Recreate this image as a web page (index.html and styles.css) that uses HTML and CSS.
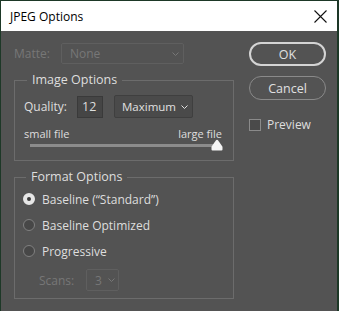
FILE: index.html
```html
<!DOCTYPE html>
<html lang="en">
<head>
  <meta charset="UTF-8">
  <title>JPEG Options</title>
  <link rel="stylesheet" href="styles.css">
</head>
<body>
  <div class="window">
    <div class="titlebar">
      <span class="title">JPEG Options</span>
      <svg class="close" width="13" height="13" viewBox="0 0 13 13">
        <path d="M0.5 0.5 L12.5 12.5 M12.5 0.5 L0.5 12.5" stroke="#111" stroke-width="1.1" fill="none"/>
      </svg>
    </div>

    <div class="content">
      <div class="main">
        <div class="matte-row">
          <span class="matte-label">Matte:</span>
          <div class="select select-matte disabled">
            <span>None</span>
            <svg class="chevron" width="7" height="4" viewBox="0 0 7 4"><path d="M0.5 0.5 L3.5 3.5 L6.5 0.5" stroke="currentColor" fill="none"/></svg>
          </div>
        </div>

        <fieldset class="group image-group">
          <legend>Image Options</legend>
          <div class="quality-row">
            <span class="quality-label">Quality:</span>
            <div class="num-input">12</div>
            <div class="select select-quality">
              <span>Maximum</span>
              <svg class="chevron" width="7" height="4" viewBox="0 0 7 4"><path d="M0.5 0.5 L3.5 3.5 L6.5 0.5" stroke="currentColor" fill="none"/></svg>
            </div>
          </div>
          <div class="slider-labels">
            <span>small file</span>
            <span>large file</span>
          </div>
          <div class="slider">
            <div class="track"></div>
            <svg class="thumb" width="12" height="12" viewBox="0 0 12 12">
              <path d="M6 0.8 Q6.6 0.8 7 1.3 L11.2 7.2 Q11.5 7.7 11.5 8.2 L11.5 10.4 Q11.5 11.5 10.4 11.5 L1.6 11.5 Q0.5 11.5 0.5 10.4 L0.5 8.2 Q0.5 7.7 0.8 7.2 L5 1.3 Q5.4 0.8 6 0.8 Z" fill="#f4f4f4"/>
            </svg>
          </div>
        </fieldset>

        <fieldset class="group format-group">
          <legend>Format Options</legend>
          <div class="radio-row">
            <span class="radio checked"></span>
            <span>Baseline (“Standard”)</span>
          </div>
          <div class="radio-row">
            <span class="radio"></span>
            <span>Baseline Optimized</span>
          </div>
          <div class="radio-row">
            <span class="radio"></span>
            <span>Progressive</span>
          </div>
          <div class="scans-row">
            <span class="scans-label">Scans:</span>
            <div class="select select-scans disabled">
              <span>3</span>
              <svg class="chevron" width="7" height="4" viewBox="0 0 7 4"><path d="M0.5 0.5 L3.5 3.5 L6.5 0.5" stroke="currentColor" fill="none"/></svg>
            </div>
          </div>
        </fieldset>
      </div>

      <div class="buttons">
        <button class="btn btn-default">OK</button>
        <button class="btn">Cancel</button>
        <label class="preview">
          <span class="checkbox"></span>
          <span>Preview</span>
        </label>
      </div>
    </div>
  </div>
</body>
</html>
```

FILE: styles.css
```css
body {
  margin: 0;
  background-color: #1d3827;
  font-family: "Open Sans", "Noto Sans", sans-serif;
  font-size: 12px;
  color: #dedede;
}

.window {
  margin: 1px 2px 0 1px;
  height: 310px;
  background-color: #535353;
}

.titlebar {
  height: 30px;
  background-color: #fff;
  display: flex;
  align-items: center;
  justify-content: space-between;
  padding: 0 10px 0 9px;
}

.title {
  color: #000;
  font-size: 12px;
}

.content {
  display: flex;
  padding: 12px 0 0 13px;
}

.main {
  width: 220px;
}

/* matte */
.matte-row {
  display: flex;
  align-items: center;
  height: 21px;
}

.matte-label {
  width: 47px;
  color: #777;
}

.select {
  box-sizing: border-box;
  display: flex;
  align-items: center;
  justify-content: space-between;
  border: 1px solid #3f3f3f;
  background-color: #4a4a4a;
  border-radius: 2px;
  color: #e0e0e0;
}

.select.disabled {
  border-color: #5f5f5f;
  background-color: #535353;
  color: #777;
}

.select-matte {
  width: 123px;
  height: 21px;
  padding: 0 4px 0 8px;
}

.chevron {
  display: block;
}

/* groups */
.group {
  margin: 0;
  border: 1px solid #6c6c6c;
  min-width: 0;
}

.group legend {
  padding: 0 5px;
  margin-left: 3px;
  line-height: 16px;
  font-size: 12.5px;
}

.image-group {
  margin-top: 8px;
  padding: 7px 11px 9px 9px;
}

.quality-row {
  display: flex;
  align-items: center;
  height: 23px;
}

.quality-label {
  width: 53px;
}

.num-input {
  box-sizing: border-box;
  width: 26px;
  height: 22px;
  line-height: 20px;
  border: 1px solid #3a3a3a;
  background-color: #454545;
  padding-left: 4px;
  margin-right: 11px;
  font-size: 12.5px;
}

.select-quality {
  width: 79px;
  height: 23px;
  padding: 0 4px 0 7px;
  font-size: 11.5px;
}

.slider-labels {
  display: flex;
  justify-content: space-between;
  font-size: 11px;
  line-height: 13px;
  margin-top: 9px;
}

.slider {
  position: relative;
  height: 12px;
  margin: -1px 0 0 6px;
}

.track {
  position: relative;
  top: 5px;
  height: 3px;
  width: 186px;
  background-color: #8c8c8c;
}

.thumb {
  position: absolute;
  right: -1px;
  top: 0;
}

.format-group {
  margin-top: 8px;
  padding: 6px 10px 7px 8px;
}

.radio-row {
  display: flex;
  align-items: center;
  gap: 7px;
  height: 16px;
  margin-bottom: 10px;
}

.radio {
  box-sizing: border-box;
  width: 12px;
  height: 12px;
  border-radius: 50%;
  border: 1px solid #808080;
  background-color: #474747;
}

.radio.checked {
  border: 4px solid #e6e6e6;
  background-color: #3a3a3a;
}

.scans-row {
  display: flex;
  align-items: center;
  height: 22px;
  padding-left: 16px;
}

.scans-label {
  width: 47px;
  color: #777;
}

.select-scans {
  width: 33px;
  height: 22px;
  padding: 0 3px 0 8px;
}

/* buttons */
.buttons {
  width: 77px;
  margin: -1px 0 0 15px;
  display: flex;
  flex-direction: column;
}

.btn {
  box-sizing: border-box;
  height: 24px;
  border-radius: 12px;
  border: 1px solid #8a8a8a;
  background-color: #535353;
  color: #e0e0e0;
  font-family: inherit;
  font-size: 12.5px;
  padding: 0;
  margin-bottom: 10px;
}

.btn-default {
  border: 2px solid #d4d4d4;
}

.preview {
  display: flex;
  align-items: center;
  gap: 6px;
  margin-top: 6px;
}

.checkbox {
  box-sizing: border-box;
  width: 12px;
  height: 12px;
  border: 1px solid #8a8a8a;
  background-color: #4a4a4a;
}
```
